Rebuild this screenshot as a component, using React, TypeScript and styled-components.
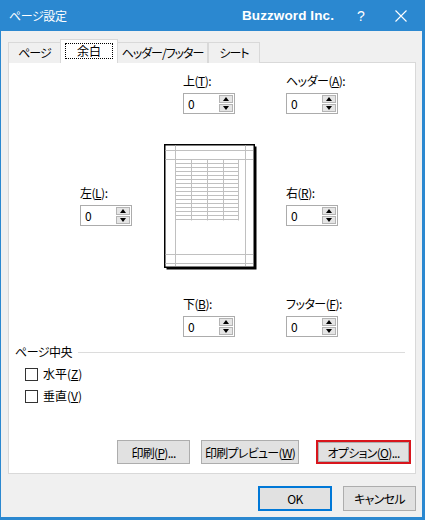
import { FC, ReactNode } from "react";
import styled, { createGlobalStyle } from "styled-components";

// global
const GlobalStyle = createGlobalStyle`
  html, body {
    margin: 0;
    padding: 0;
    background: #f0f0f0;
  }
  * {
    box-sizing: border-box;
  }
  body {
    font-family: "Noto Sans CJK JP", "Noto Sans", sans-serif;
    font-feature-settings: "palt";
    font-size: 12px;
    color: #000;
  }
`;

// css
const Window = styled.div`
  width: 425px;
  height: 520px;
  display: flex;
  flex-direction: column;
  background: #f0f0f0;
`;

const TitleBar = styled.div`
  height: 31px;
  flex: none;
  display: flex;
  align-items: center;
  background: #2b88d0;
  color: #fff;
  padding-left: 9px;
`;

const Caption = styled.span`
  font-size: 12px;
  line-height: 16px;
  flex: 1;
  letter-spacing: -0.4px;
`;

const Brand = styled.span`
  font-family: "Liberation Sans", Arial, sans-serif;
  font-weight: bold;
  font-size: 13.5px;
  letter-spacing: 0.1px;
  margin-right: 23px;
`;

const Help = styled.span`
  font-family: "Liberation Sans", Arial, sans-serif;
  font-size: 14px;
  width: 10px;
  margin-right: 28px;
`;

const CloseIcon = styled.svg`
  width: 12px;
  height: 12px;
  margin-right: 18px;
`;

const Body = styled.div`
  flex: 1;
  display: flex;
  flex-direction: column;
  border-left: 1px solid #2b88d0;
  border-right: 3px solid #2b88d0;
  border-bottom: 3px solid #2b88d0;
  padding: 8px 6px 0 7px;
`;

const Tabs = styled.div`
  display: flex;
  align-items: flex-end;
  height: 24px;
  margin-bottom: -1px;
`;

const Tab = styled.div<{ $active?: boolean; $width: number }>`
  width: ${(p) => p.$width}px;
  height: ${(p) => (p.$active ? 24 : 21)}px;
  display: flex;
  align-items: center;
  justify-content: center;
  padding-bottom: ${(p) => (p.$active ? 2 : 1)}px;
  border: 1px solid #d9d9d9;
  border-bottom: none;
  background: ${(p) => (p.$active ? "#fff" : "#f0f0f0")};
  position: ${(p) => (p.$active ? "relative" : "static")};
  z-index: ${(p) => (p.$active ? 1 : 0)};
  margin-left: ${(p) => (p.$active ? -1 : 0)}px;
  margin-right: ${(p) => (p.$active ? -1 : 0)}px;
  white-space: nowrap;
  letter-spacing: -1px;
`;

const FocusText = styled.span`
  border: 1px dotted #000;
  padding: 0 11px;
  line-height: 14px;
  letter-spacing: 0;
`;

const Panel = styled.div`
  height: 412px;
  flex: none;
  display: flex;
  flex-direction: column;
  background: #fff;
  border: 1px solid #d9d9d9;
  padding: 10px 4px 9px 0;
`;

const MarginGrid = styled.div`
  display: grid;
  grid-template-columns: 52px 154px 52px;
  margin-left: 71px;
  align-items: start;
`;

const FieldBox = styled.div<{ $col: number; $row: number; $offset?: number }>`
  grid-column: ${(p) => p.$col};
  grid-row: ${(p) => p.$row};
  justify-self: ${(p) => (p.$col === 2 ? "center" : "start")};
  margin-top: ${(p) => p.$offset ?? 0}px;
  width: 52px;
`;

const Label = styled.div`
  line-height: 16px;
  height: 16px;
  margin-bottom: 4px;
  white-space: nowrap;
  letter-spacing: -0.5px;
`;

const Spinner = styled.div`
  width: 52px;
  height: 21px;
  display: flex;
  border: 1px solid #acacac;
  background: #fff;
  padding: 1px 1px 1px 0;
`;

const SpinValue = styled.span`
  flex: 1;
  line-height: 17px;
  padding-left: 4px;
`;

const SpinButtons = styled.div`
  width: 14px;
  display: flex;
  flex-direction: column;
  gap: 1px;
`;

const SpinButton = styled.div<{ $down?: boolean }>`
  flex: 1;
  display: flex;
  align-items: center;
  justify-content: center;
  background: #e5e5e5;
  border: 1px solid #b4b4b4;

  &::before {
    content: "";
    width: 0;
    height: 0;
    border-left: 3.5px solid transparent;
    border-right: 3.5px solid transparent;
    ${(p) =>
      p.$down
        ? "border-top: 4px solid #000;"
        : "border-bottom: 4px solid #000;"}
  }
`;

const Preview = styled.svg`
  grid-column: 2;
  grid-row: 2;
  justify-self: center;
  margin: 30px 0 26px 3px;
  display: block;
`;

const GroupHeader = styled.div`
  display: flex;
  align-items: center;
  margin: 8px 6px 0 6px;
  line-height: 14px;
  letter-spacing: -0.5px;

  &::after {
    content: "";
    flex: 1;
    height: 1px;
    background: #dcdcdc;
    margin-left: 6px;
  }
`;

const CheckList = styled.div`
  display: flex;
  flex-direction: column;
  gap: 6px;
  margin: 7px 0 0 16px;
`;

const CheckRow = styled.label`
  display: flex;
  align-items: center;
  line-height: 16px;
  gap: 5px;
`;

const CheckBox = styled.span`
  width: 13px;
  height: 13px;
  border: 1px solid #333;
  background: #fff;
`;

const ButtonRow = styled.div`
  display: flex;
  justify-content: flex-end;
  margin-top: auto;
`;

const Button = styled.div<{
  $width: number;
  $height?: number;
  $gap?: number;
  $variant?: "default" | "marked";
}>`
  width: ${(p) => p.$width}px;
  height: ${(p) => p.$height ?? 24}px;
  display: flex;
  align-items: center;
  justify-content: center;
  background: #e1e1e1;
  border: ${(p) =>
    p.$variant === "marked"
      ? "2px solid #d8151c"
      : p.$variant === "default"
      ? "2px solid #0078d7"
      : "1px solid #adadad"};
  box-shadow: ${(p) =>
    p.$variant === "marked" ? "inset 0 0 0 1px #adadad" : "none"};
  white-space: nowrap;
  letter-spacing: -0.7px;
  margin-left: ${(p) => p.$gap ?? 11}px;
`;

const Footer = styled.div`
  display: flex;
  justify-content: flex-end;
  margin-top: 12px;
`;

const Page: FC = () => {
  const rows = [];
  for (let y = 15; y <= 76; y += 4) rows.push(y);
  return (
    <Preview width="93" height="126" viewBox="0 0 93 126">
      <rect x="2.5" y="2.5" width="90" height="123" fill="#000" />
      <rect x="0.75" y="0.75" width="89.5" height="122.5" fill="#fff" stroke="#000" strokeWidth="1.5" />
      <g stroke="#c0c0c0" strokeWidth="1" fill="none">
        <line x1="11.5" y1="1.5" x2="11.5" y2="122" />
        <line x1="81.5" y1="1.5" x2="81.5" y2="122" />
        <line x1="1.5" y1="6.5" x2="89" y2="6.5" />
        <line x1="1.5" y1="15.5" x2="89" y2="15.5" />
        <line x1="1.5" y1="110.5" x2="89" y2="110.5" />
        <line x1="1.5" y1="119.5" x2="89" y2="119.5" />
        {rows.map((y) => (
          <line key={`row-${y}`} x1="11.5" y1={y + 0.5} x2="74.5" y2={y + 0.5} />
        ))}
        {[27, 43, 59, 74].map((x) => (
          <line key={`col-${x}`} x1={x + 0.5} y1="15.5" x2={x + 0.5} y2="76.5" />
        ))}
      </g>
    </Preview>
  );
};

const Field: FC<{ label: ReactNode; col: number; row: number; offset?: number }> = ({
  label,
  col,
  row,
  offset,
}) => (
  <FieldBox $col={col} $row={row} $offset={offset}>
    <Label>{label}</Label>
    <Spinner>
      <SpinValue>0</SpinValue>
      <SpinButtons>
        <SpinButton />
        <SpinButton $down />
      </SpinButtons>
    </Spinner>
  </FieldBox>
);

export default function App() {
  return (
    <Window>
      <GlobalStyle />
      <TitleBar>
        <Caption>ページ設定</Caption>
        <Brand>Buzzword Inc.</Brand>
        <Help>?</Help>
        <CloseIcon viewBox="0 0 12 12">
          <path d="M0.5 0.5 L11.5 11.5 M11.5 0.5 L0.5 11.5" stroke="#fff" strokeWidth="1.1" />
        </CloseIcon>
      </TitleBar>
      <Body>
        <Tabs>
          <Tab $width={53}>ページ</Tab>
          <Tab $width={58} $active>
            <FocusText>余白</FocusText>
          </Tab>
          <Tab $width={91}>ヘッダー/フッター</Tab>
          <Tab $width={52}>シート</Tab>
        </Tabs>
        <Panel>
          <MarginGrid>
            <Field col={2} row={1} label={<>上(<u>T</u>):</>} />
            <Field col={3} row={1} label={<>ヘッダー(<u>A</u>):</>} />
            <Field col={1} row={2} offset={71} label={<>左(<u>L</u>):</>} />
            <Page />
            <Field col={3} row={2} offset={71} label={<>右(<u>R</u>):</>} />
            <Field col={2} row={3} label={<>下(<u>B</u>):</>} />
            <Field col={3} row={3} label={<>フッター(<u>F</u>):</>} />
          </MarginGrid>
          <GroupHeader>ページ中央</GroupHeader>
          <CheckList>
            <CheckRow>
              <CheckBox />
              <span>水平(<u>Z</u>)</span>
            </CheckRow>
            <CheckRow>
              <CheckBox />
              <span>垂直(<u>V</u>)</span>
            </CheckRow>
          </CheckList>
          <ButtonRow>
            <Button $width={73}>
              <span>印刷(<u>P</u>)...</span>
            </Button>
            <Button $width={98}>
              <span>印刷プレビュー(<u>W</u>)</span>
            </Button>
            <Button $width={95} $gap={17} $variant="marked">
              <span>オプション(<u>O</u>)...</span>
            </Button>
          </ButtonRow>
        </Panel>
        <Footer>
          <Button $width={74} $height={25} $variant="default">
            OK
          </Button>
          <Button $width={73} $height={25}>
            キャンセル
          </Button>
        </Footer>
      </Body>
    </Window>
  );
}
